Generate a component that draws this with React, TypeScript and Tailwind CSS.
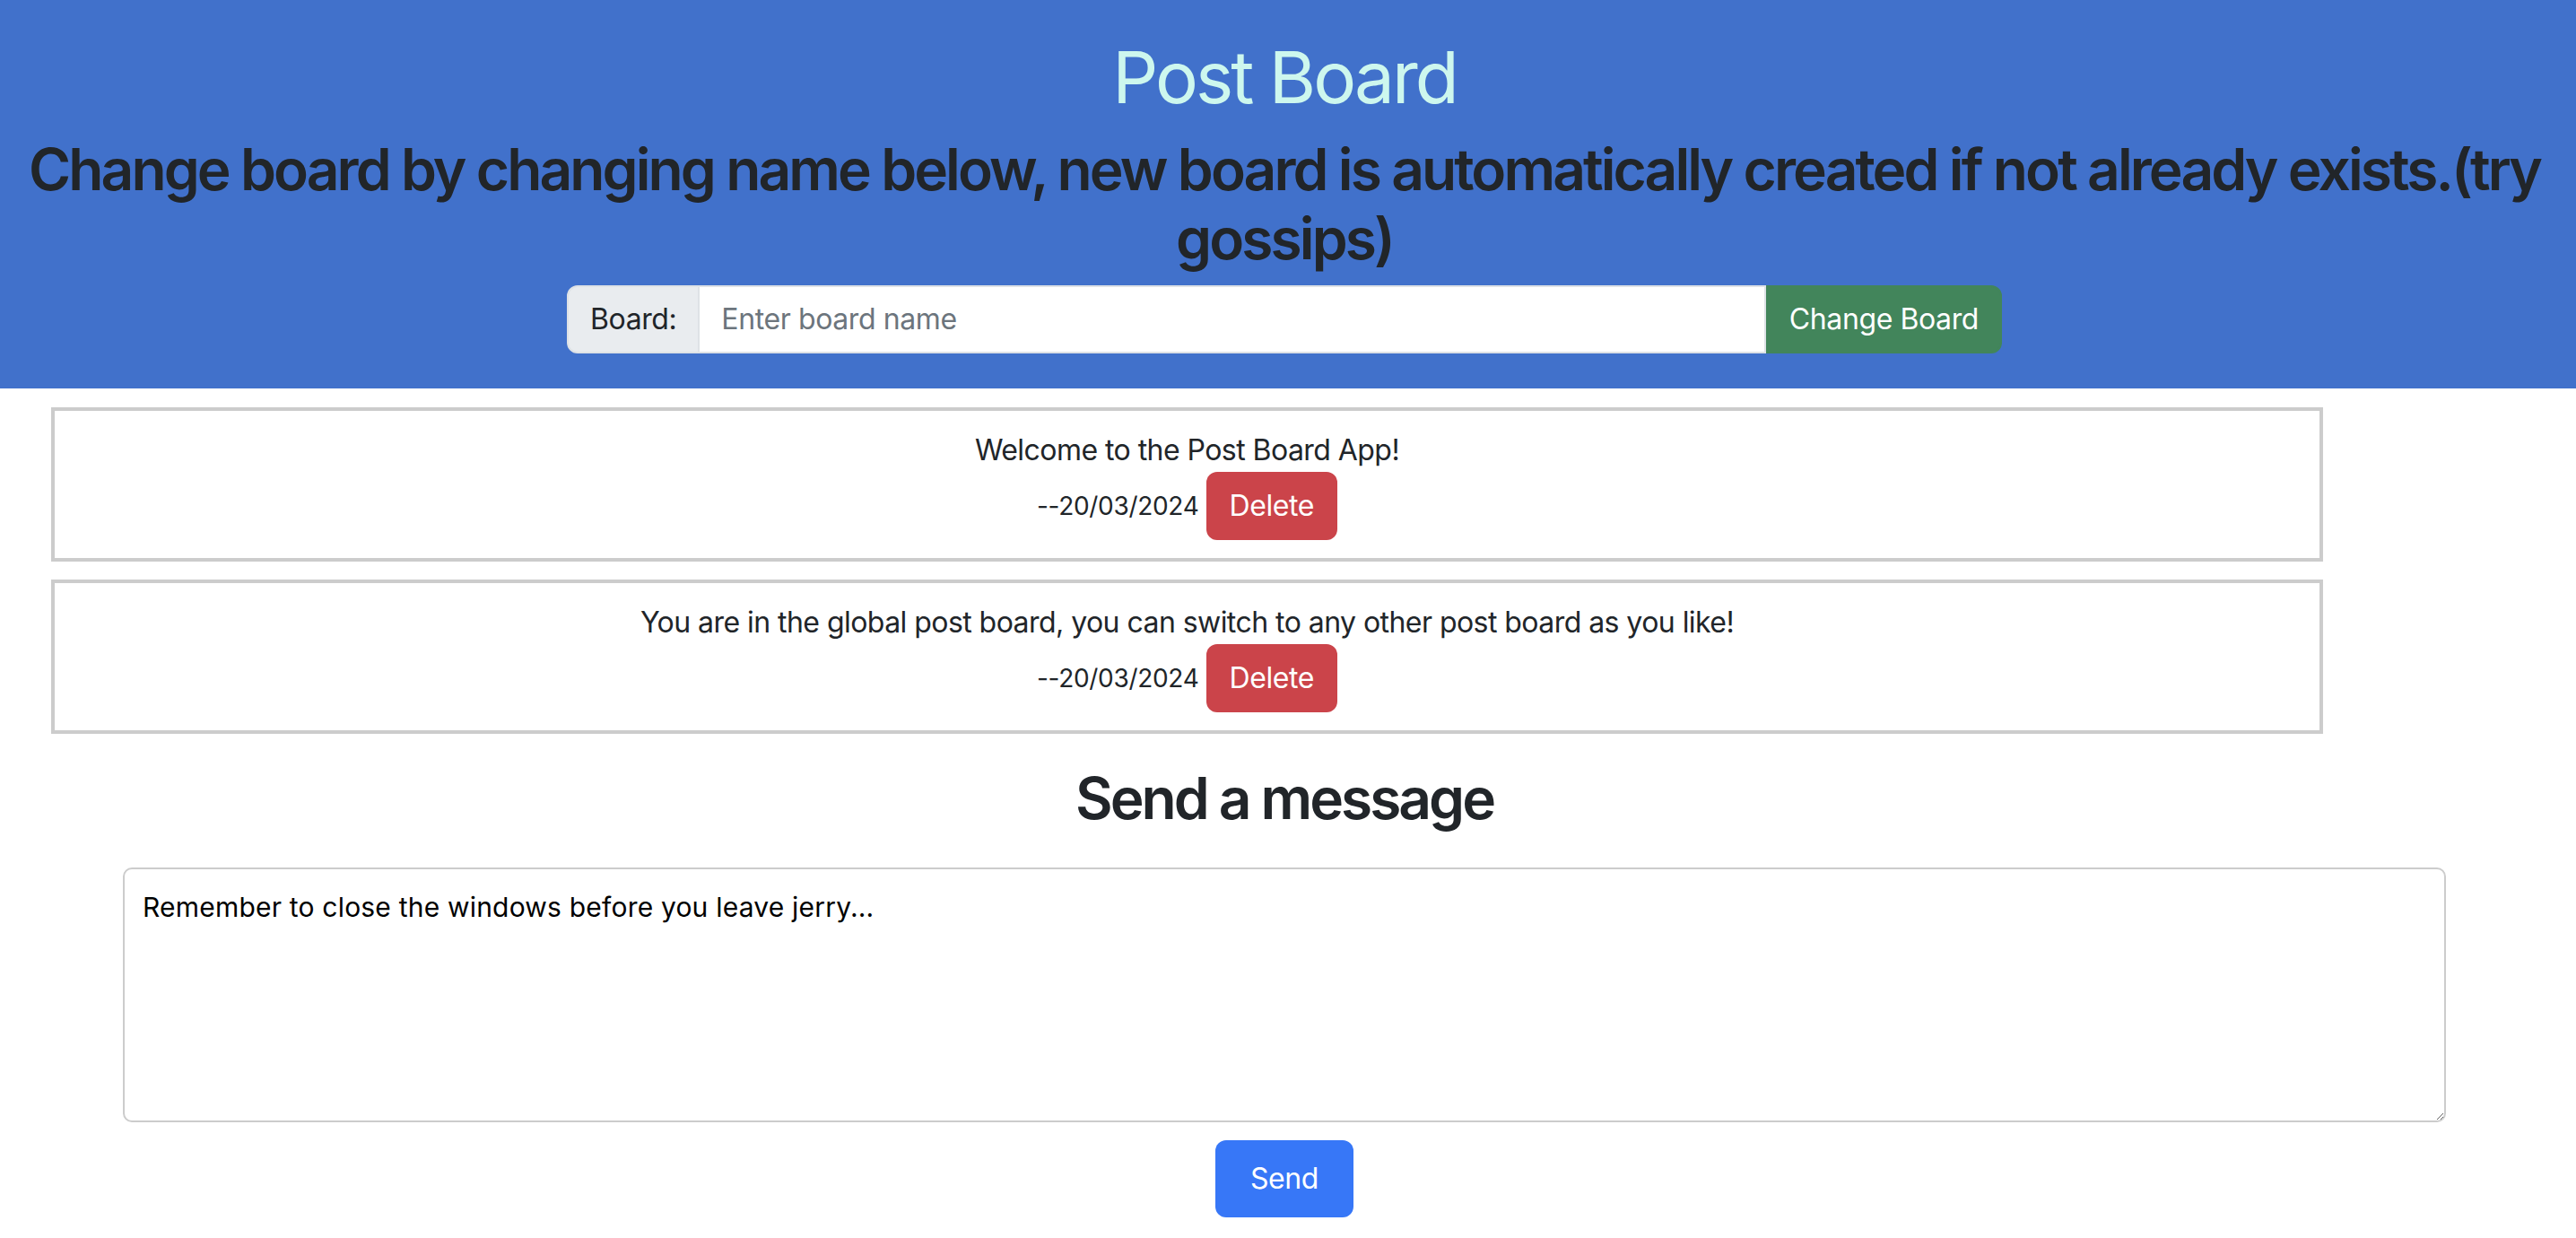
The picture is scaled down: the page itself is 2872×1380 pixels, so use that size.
import { useState } from "react";

const posts = [
  { id: 1, text: "Welcome to the Post Board App!", date: "20/03/2024" },
  {
    id: 2,
    text: "You are in the global post board, you can switch to any other post board as you like!",
    date: "20/03/2024",
  },
];

export default function App() {
  const [board, setBoard] = useState("");
  const [message, setMessage] = useState("Remember to close the windows before you leave jerry...");

  return (
    <div className="min-h-screen bg-white font-['Inter','Noto_Sans',sans-serif] text-[#212529]">
      <header className="bg-[#4171cb] pt-[38px] pb-[39px] pr-2 text-center">
        <h1 className="mb-4 text-[80px] leading-[96px] font-normal tracking-[-3px] text-[#cdf7ee]">Post Board</h1>
        <h2 className="mb-[14px] px-[4px] text-[64px] leading-[77px] font-semibold tracking-[-2.9px] text-[#212529]">
          Change board by changing name below, new board is automatically created if not already{" "}
          <span className="whitespace-nowrap">exists.(try</span> gossips)
        </h2>
        <div className="mx-auto flex h-[76px] w-[1600px]">
          <span className="flex items-center rounded-l-[12px] border-2 border-[#dee2e6] bg-[#e9ecef] px-6 text-[32px] tracking-[-0.4px] text-[#212529]">
            Board:
          </span>
          <input
            type="text"
            value={board}
            onChange={(e) => setBoard(e.target.value)}
            placeholder="Enter board name"
            className="min-w-0 flex-1 border-2 border-l-0 border-[#dee2e6] bg-white px-6 text-[32px] tracking-[-0.4px] text-[#212529] placeholder-[#6c757d] focus:outline-none"
          />
          <button className="rounded-r-[12px] border-2 border-[#42855b] bg-[#42855b] px-6 text-[32px] tracking-[-0.4px] text-white">
            Change Board
          </button>
        </div>
      </header>

      <main className="pr-2 pb-6">
        <div className="ml-[57px] flex w-[2533px] flex-col gap-5 pt-[21px]">
          {posts.map((p) => (
            <div key={p.id} className="border-4 border-[#cccccc] p-5 text-center">
              <p className="text-[32px] leading-[48px] tracking-[-0.55px]">{p.text}</p>
              <div className="flex items-center justify-center gap-2">
                <span className="text-[28px] tracking-[-0.3px]">--{p.date}</span>
                <button className="h-[76px] rounded-[12px] bg-[#cb444a] px-[26px] text-[32px] tracking-[-0.4px] text-white">
                  Delete
                </button>
              </div>
            </div>
          ))}
        </div>

        <h2 className="mt-[33px] text-center text-[64px] leading-[77px] font-semibold tracking-[-3px]">
          Send a message
        </h2>

        <textarea
          value={message}
          onChange={(e) => setMessage(e.target.value)}
          className="mx-auto mt-[39px] block h-[284px] w-[2590px] rounded-[10px] border-2 border-[#cccccc] px-5 pt-5 text-[30px] tracking-[0.2px] text-black focus:outline-none"
        />

        <div className="mt-5 flex justify-center">
          <button className="h-[86px] w-[154px] rounded-[12px] bg-[#3777f7] text-[32px] tracking-[-0.4px] text-white">
            Send
          </button>
        </div>
      </main>
    </div>
  );
}
